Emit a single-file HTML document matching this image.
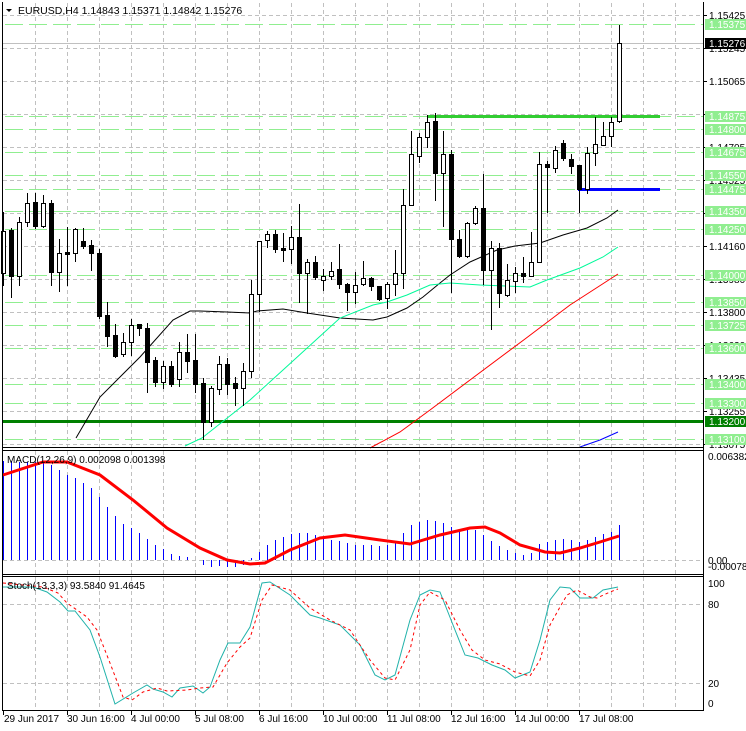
<!DOCTYPE html>
<html><head><meta charset="utf-8"><style>
html,body{margin:0;padding:0;background:#fff;}
svg{display:block;font-family:"Liberation Sans",sans-serif;}
</style></head><body>
<svg width="746" height="731" viewBox="0 0 746 731" xmlns="http://www.w3.org/2000/svg">
<rect width="746" height="731" fill="#fff"/>
<g stroke="#c0c0c0" stroke-dasharray="4 3" stroke-width="1">
<path d="M35.5 3V447M67.5 3V447M99.5 3V447M131.5 3V447M163.5 3V447M195.5 3V447M227.5 3V447M259.5 3V447M291.5 3V447M323.5 3V447M355.5 3V447M387.5 3V447M419.5 3V447M451.5 3V447M483.5 3V447M515.5 3V447M547.5 3V447M579.5 3V447M611.5 3V447M643.5 3V447M675.5 3V447"/>
<path d="M35.5 451V574M67.5 451V574M99.5 451V574M131.5 451V574M163.5 451V574M195.5 451V574M227.5 451V574M259.5 451V574M291.5 451V574M323.5 451V574M355.5 451V574M387.5 451V574M419.5 451V574M451.5 451V574M483.5 451V574M515.5 451V574M547.5 451V574M579.5 451V574M611.5 451V574M643.5 451V574M675.5 451V574"/>
<path d="M35.5 577V710M67.5 577V710M99.5 577V710M131.5 577V710M163.5 577V710M195.5 577V710M227.5 577V710M259.5 577V710M291.5 577V710M323.5 577V710M355.5 577V710M387.5 577V710M419.5 577V710M451.5 577V710M483.5 577V710M515.5 577V710M547.5 577V710M579.5 577V710M611.5 577V710M643.5 577V710M675.5 577V710"/>
<path d="M3 15.5H703M3 48.5H703M3 81.5H703M3 114.5H703M3 147.5H703M3 180.5H703M3 213.5H703M3 246.5H703M3 279.5H703M3 312.5H703M3 345.5H703M3 378.5H703M3 411.5H703M3 444.5H703M3 560.5H703M3 604.5H703M3 683.5H703"/>
</g>
<g stroke="#90ee90" stroke-width="1" stroke-dasharray="18 6">
<path d="M5 24.5H703M5 129.5H703M5 152.5H703M5 175.5H703M5 189.5H703M5 211.5H703M5 229.5H703M5 275.5H703M5 302.5H703M5 325.5H703M5 348.5H703M5 384.5H703M5 403.5H703M5 439.5H703M5 116.5H703"/>
</g>
<path d="M3 43.5H703" stroke="#c0c0c0" stroke-width="1"/>
<path d="M3 421.5H703" stroke="#008000" stroke-width="3"/>
<path d="M427 116.5H660" stroke="#32cd32" stroke-width="3"/>
<path d="M578 189.5H660" stroke="#0000ff" stroke-width="3"/>
<polyline fill="none" stroke="#000" stroke-width="1" points="76,438 100,397 140,357 173,320 190,311 200,311 227,312 250,313 257,311 283,309 307,313 340,318 373,320 387,317 407,308 423,297 440,283 450,275 470,262 497,250 515,246 540,243 563,235 587,228 607,218 618,210"/>
<polyline fill="none" stroke="#00fa9a" stroke-width="1" points="185,446 202,438 250,400 283,370 317,339 340,318 373,305 387,302 407,295 430,285 450,283 480,285 530,287 547,280 580,268 603,257 618,247"/>
<polyline fill="none" stroke="#ff0000" stroke-width="1" points="370,448 400,432 430,410 470,380 525,339 570,305 618,274"/>
<polyline fill="none" stroke="#0000ff" stroke-width="1" points="580,447 600,440 618,432"/>
<path stroke="#000" stroke-width="1" fill="none" d="M3.5 212V286M11.5 228V298M19.5 217V286M27.5 193V227M35.5 193V229M43.5 195V228M51.5 200V286M59.5 239V292M67.5 227V286M75.5 228V262M83.5 228V249M91.5 240V271M99.5 249V319M107.5 302V347M115.5 324V358M123.5 333V357M131.5 319V356M139.5 324V336M147.5 323V393M155.5 357V387M163.5 361V389M171.5 361V387M179.5 342V387M187.5 334V373M195.5 334V393M203.5 378V440M211.5 386V427M219.5 356V395M227.5 358V395M235.5 377V406M243.5 363V406M251.5 280V378M259.5 241V312M267.5 231V248M275.5 230V253M283.5 233V262M291.5 226V264M299.5 204V303M307.5 259V314M315.5 256V280M323.5 269V291M331.5 262V280M339.5 244V289M347.5 283V311M355.5 272V304M363.5 261V286M371.5 277V291M379.5 286V301M387.5 282V309M395.5 250V296M403.5 189V289M411.5 131V205M419.5 133V163M427.5 115V148M435.5 113V201M443.5 131V227M451.5 150V293M459.5 230V258M467.5 222V258M475.5 206V225M483.5 174V285M491.5 241V330M499.5 243V308M507.5 264V297M515.5 267V293M523.5 257V283M531.5 232V276M539.5 152V263M547.5 161V213M555.5 146V173M563.5 140V161M571.5 154V174M579.5 165V213M587.5 147V194M595.5 117V166M603.5 122V146M611.5 117V147M619.5 25V123"/>
<g fill="#fff" stroke="#000" stroke-width="1">
<rect x="1.5" y="231.5" width="4" height="42"/>
<rect x="17.5" y="222.5" width="4" height="54"/>
<rect x="25.5" y="203.5" width="4" height="19"/>
<rect x="41.5" y="203.5" width="4" height="23"/>
<rect x="57.5" y="253.5" width="4" height="19"/>
<rect x="73.5" y="229.5" width="4" height="24"/>
<rect x="121.5" y="342.5" width="4" height="12"/>
<rect x="129.5" y="325.5" width="4" height="17"/>
<rect x="161.5" y="366.5" width="4" height="16"/>
<rect x="177.5" y="352.5" width="4" height="27"/>
<rect x="209.5" y="388.5" width="4" height="34"/>
<rect x="217.5" y="364.5" width="4" height="25"/>
<rect x="241.5" y="371.5" width="4" height="17"/>
<rect x="249.5" y="294.5" width="4" height="77"/>
<rect x="257.5" y="241.5" width="4" height="53"/>
<rect x="265.5" y="234.5" width="4" height="6"/>
<rect x="289.5" y="237.5" width="4" height="12"/>
<rect x="305.5" y="262.5" width="4" height="11"/>
<rect x="321.5" y="276.5" width="4" height="4"/>
<rect x="329.5" y="271.5" width="4" height="5"/>
<rect x="353.5" y="285.5" width="4" height="7"/>
<rect x="361.5" y="278.5" width="4" height="6"/>
<rect x="385.5" y="284.5" width="4" height="14"/>
<rect x="393.5" y="273.5" width="4" height="11"/>
<rect x="401.5" y="205.5" width="4" height="68"/>
<rect x="409.5" y="154.5" width="4" height="51"/>
<rect x="417.5" y="137.5" width="4" height="19"/>
<rect x="425.5" y="122.5" width="4" height="15"/>
<rect x="441.5" y="154.5" width="4" height="19"/>
<rect x="465.5" y="223.5" width="4" height="33"/>
<rect x="473.5" y="208.5" width="4" height="15"/>
<rect x="489.5" y="248.5" width="4" height="22"/>
<rect x="505.5" y="280.5" width="4" height="15"/>
<rect x="513.5" y="273.5" width="4" height="8"/>
<rect x="529.5" y="262.5" width="4" height="14"/>
<rect x="537.5" y="164.5" width="4" height="98"/>
<rect x="553.5" y="150.5" width="4" height="18"/>
<rect x="585.5" y="153.5" width="4" height="36"/>
<rect x="593.5" y="144.5" width="4" height="9"/>
<rect x="601.5" y="136.5" width="4" height="9"/>
<rect x="609.5" y="122.5" width="4" height="14"/>
<rect x="617.5" y="43.5" width="4" height="78"/>
</g>
<g fill="#000" stroke="#000" stroke-width="1">
<rect x="9.5" y="230.5" width="4" height="46"/>
<rect x="33.5" y="202.5" width="4" height="24"/>
<rect x="49.5" y="203.5" width="4" height="69"/>
<rect x="65.5" y="252.5" width="4" height="2"/>
<rect x="81.5" y="241.5" width="4" height="5"/>
<rect x="89.5" y="245.5" width="4" height="8"/>
<rect x="97.5" y="253.5" width="4" height="63"/>
<rect x="105.5" y="315.5" width="4" height="21"/>
<rect x="113.5" y="335.5" width="4" height="21"/>
<rect x="137.5" y="324.5" width="4" height="4"/>
<rect x="145.5" y="328.5" width="4" height="34"/>
<rect x="153.5" y="360.5" width="4" height="22"/>
<rect x="169.5" y="366.5" width="4" height="18"/>
<rect x="185.5" y="352.5" width="4" height="9"/>
<rect x="193.5" y="360.5" width="4" height="24"/>
<rect x="201.5" y="383.5" width="4" height="39"/>
<rect x="225.5" y="364.5" width="4" height="20"/>
<rect x="233.5" y="383.5" width="4" height="5"/>
<rect x="273.5" y="234.5" width="4" height="15"/>
<rect x="281.5" y="248.5" width="4" height="2"/>
<rect x="297.5" y="237.5" width="4" height="36"/>
<rect x="313.5" y="262.5" width="4" height="15"/>
<rect x="337.5" y="269.5" width="4" height="15"/>
<rect x="345.5" y="284.5" width="4" height="8"/>
<rect x="369.5" y="278.5" width="4" height="8"/>
<rect x="377.5" y="286.5" width="4" height="13"/>
<rect x="433.5" y="121.5" width="4" height="52"/>
<rect x="449.5" y="154.5" width="4" height="85"/>
<rect x="457.5" y="239.5" width="4" height="17"/>
<rect x="481.5" y="208.5" width="4" height="62"/>
<rect x="497.5" y="248.5" width="4" height="45"/>
<rect x="521.5" y="273.5" width="4" height="3"/>
<rect x="545.5" y="164.5" width="4" height="3"/>
<rect x="561.5" y="143.5" width="4" height="15"/>
<rect x="569.5" y="159.5" width="4" height="7"/>
<rect x="577.5" y="165.5" width="4" height="24"/>
</g>
<path stroke="#0000ff" stroke-width="1" fill="none" d="M3.5 560V461M11.5 560V461M19.5 560V462M27.5 560V462M35.5 560V462M43.5 560V462M51.5 560V465M59.5 560V470M67.5 560V475M75.5 560V478M83.5 560V483M91.5 560V488M99.5 560V497M107.5 560V507M115.5 560V516M123.5 560V524M131.5 560V528M139.5 560V533M147.5 560V539M155.5 560V545M163.5 560V549M171.5 560V554M179.5 560V556M187.5 560V557M203.5 560V565M211.5 560V567M219.5 560V566M227.5 560V567M235.5 560V567M243.5 560V565M251.5 560V558M259.5 560V552M267.5 560V545M275.5 560V540M283.5 560V537M291.5 560V534M299.5 560V533M307.5 560V533M315.5 560V535M323.5 560V538M331.5 560V540M339.5 560V541M347.5 560V543M355.5 560V545M363.5 560V545M371.5 560V545M379.5 560V546M387.5 560V545M395.5 560V541M403.5 560V533M411.5 560V525M419.5 560V522M427.5 560V520M435.5 560V521M443.5 560V523M451.5 560V527M459.5 560V530M467.5 560V530M475.5 560V530M483.5 560V535M491.5 560V541M499.5 560V546M507.5 560V550M515.5 560V553M523.5 560V555M531.5 560V553M539.5 560V544M547.5 560V542M555.5 560V540M563.5 560V539M571.5 560V540M579.5 560V542M587.5 560V540M595.5 560V537M603.5 560V534M611.5 560V532M619.5 560V525"/>
<polyline fill="none" stroke="#ff0000" stroke-width="3" points="3,475 43,462 67,462 100,475 133,500 167,528 200,548 227,560 250,564 265,563 290,550 320,538 345,535 380,540 410,544 440,535 470,528 485,527 500,533 520,545 545,552 560,553 580,548 600,542 619,536"/>
<polyline fill="none" stroke="#20b2aa" stroke-width="1" points="3,587 33,587 47,592 60,602 68,611 75,611 90,630 100,657 115,704 133,693 147,685 153,689 163,692 172,697 180,688 193,686 203,693 210,687 220,660 228,643 240,643 250,627 262,583 270,582 290,595 310,615 320,618 340,625 360,645 375,675 385,680 395,675 410,620 420,595 430,590 440,592 455,630 465,655 478,658 492,665 505,670 515,678 530,672 540,640 550,600 560,587 570,588 580,598 593,598 603,590 618,587"/>
<polyline fill="none" stroke="#ff0000" stroke-width="1" stroke-dasharray="3 3" points="3,583 43,587 58,593 67,603 87,617 97,630 110,663 123,697 132,700 143,692 157,688 167,691 187,690 200,688 213,687 227,663 240,647 250,638 262,600 272,585 290,590 310,608 330,620 350,630 370,660 385,678 395,680 410,650 420,605 430,592 445,600 460,630 472,650 485,660 500,664 515,672 530,676 540,660 550,625 560,607 567,595 577,590 590,597 597,598 610,592 618,589"/>
<g stroke="#000" stroke-width="1" fill="none">
<path d="M2.5 2V711M703.5 2V711"/>
<path d="M2 447.5H704M2 450.5H704M2 574.5H704M2 576.5H704M2 710.5H704"/>
<path d="M3.5 711V715M67.5 711V715M131.5 711V715M195.5 711V715M259.5 711V715M323.5 711V715M387.5 711V715M451.5 711V715M515.5 711V715M579.5 711V715"/>
<path d="M704 15.5H707M704 48.5H707M704 81.5H707M704 114.5H707M704 147.5H707M704 180.5H707M704 213.5H707M704 246.5H707M704 279.5H707M704 312.5H707M704 345.5H707M704 378.5H707M704 411.5H707M704 444.5H707"/>
</g>
<g font-size="10" fill="#000">
<text x="709" y="19">1.15425</text>
<text x="709" y="52">1.15245</text>
<text x="709" y="85">1.15065</text>
<text x="709" y="118">1.14885</text>
<text x="709" y="151">1.14705</text>
<text x="709" y="184">1.14525</text>
<text x="709" y="217">1.14345</text>
<text x="709" y="250">1.14160</text>
<text x="709" y="283">1.13980</text>
<text x="709" y="316">1.13800</text>
<text x="709" y="349">1.13620</text>
<text x="709" y="382">1.13435</text>
<text x="709" y="415">1.13255</text>
<text x="709" y="448">1.13075</text>
<text x="708" y="460">0.006382</text>
<text x="708" y="564">0.00</text>
<text x="708" y="570">-0.000786</text>
<text x="708" y="587">100</text>
<text x="708" y="608">80</text>
<text x="708" y="687">20</text>
<text x="708" y="707">0</text>
</g>
<g fill="#90ee90">
<rect x="705" y="19" width="41" height="11"/>
<rect x="705" y="111" width="41" height="11"/>
<rect x="705" y="124" width="41" height="11"/>
<rect x="705" y="147" width="41" height="11"/>
<rect x="705" y="170" width="41" height="11"/>
<rect x="705" y="184" width="41" height="11"/>
<rect x="705" y="206" width="41" height="11"/>
<rect x="705" y="224" width="41" height="11"/>
<rect x="705" y="270" width="41" height="11"/>
<rect x="705" y="297" width="41" height="11"/>
<rect x="705" y="320" width="41" height="11"/>
<rect x="705" y="343" width="41" height="11"/>
<rect x="705" y="379" width="41" height="11"/>
<rect x="705" y="398" width="41" height="11"/>
<rect x="705" y="434" width="41" height="11"/>
</g>
<rect x="705" y="416" width="41" height="11" fill="#008000"/>
<rect x="705" y="38" width="41" height="11" fill="#000"/>
<g font-size="10" fill="#fff">
<text x="709" y="28">1.15375</text>
<text x="709" y="47">1.15276</text>
<text x="709" y="120">1.14875</text>
<text x="709" y="133">1.14800</text>
<text x="709" y="156">1.14675</text>
<text x="709" y="179">1.14550</text>
<text x="709" y="193">1.14475</text>
<text x="709" y="215">1.14350</text>
<text x="709" y="233">1.14250</text>
<text x="709" y="279">1.14000</text>
<text x="709" y="306">1.13850</text>
<text x="709" y="329">1.13725</text>
<text x="709" y="352">1.13600</text>
<text x="709" y="388">1.13400</text>
<text x="709" y="407">1.13300</text>
<text x="709" y="425">1.13200</text>
<text x="709" y="443">1.13100</text>
</g>
<path d="M6 9H12L9 12Z" fill="#000"/>
<text x="18" y="14" font-size="10.5" fill="#000">EURUSD,H4  1.14843 1.15371 1.14842 1.15276</text>
<text x="7" y="463" font-size="10" fill="#000">MACD(12,26,9) 0.002098 0.001398</text>
<text x="7" y="589" font-size="10" fill="#000">Stoch(13,3,3) 93.5840 91.4645</text>
<g font-size="10" fill="#000">
<text x="4" y="722">29 Jun 2017</text>
<text x="67" y="722">30 Jun 16:00</text>
<text x="131" y="722">4 Jul 00:00</text>
<text x="195" y="722">5 Jul 08:00</text>
<text x="259" y="722">6 Jul 16:00</text>
<text x="323" y="722">10 Jul 00:00</text>
<text x="387" y="722">11 Jul 08:00</text>
<text x="451" y="722">12 Jul 16:00</text>
<text x="515" y="722">14 Jul 00:00</text>
<text x="579" y="722">17 Jul 08:00</text>
</g>
</svg>
</body></html>
